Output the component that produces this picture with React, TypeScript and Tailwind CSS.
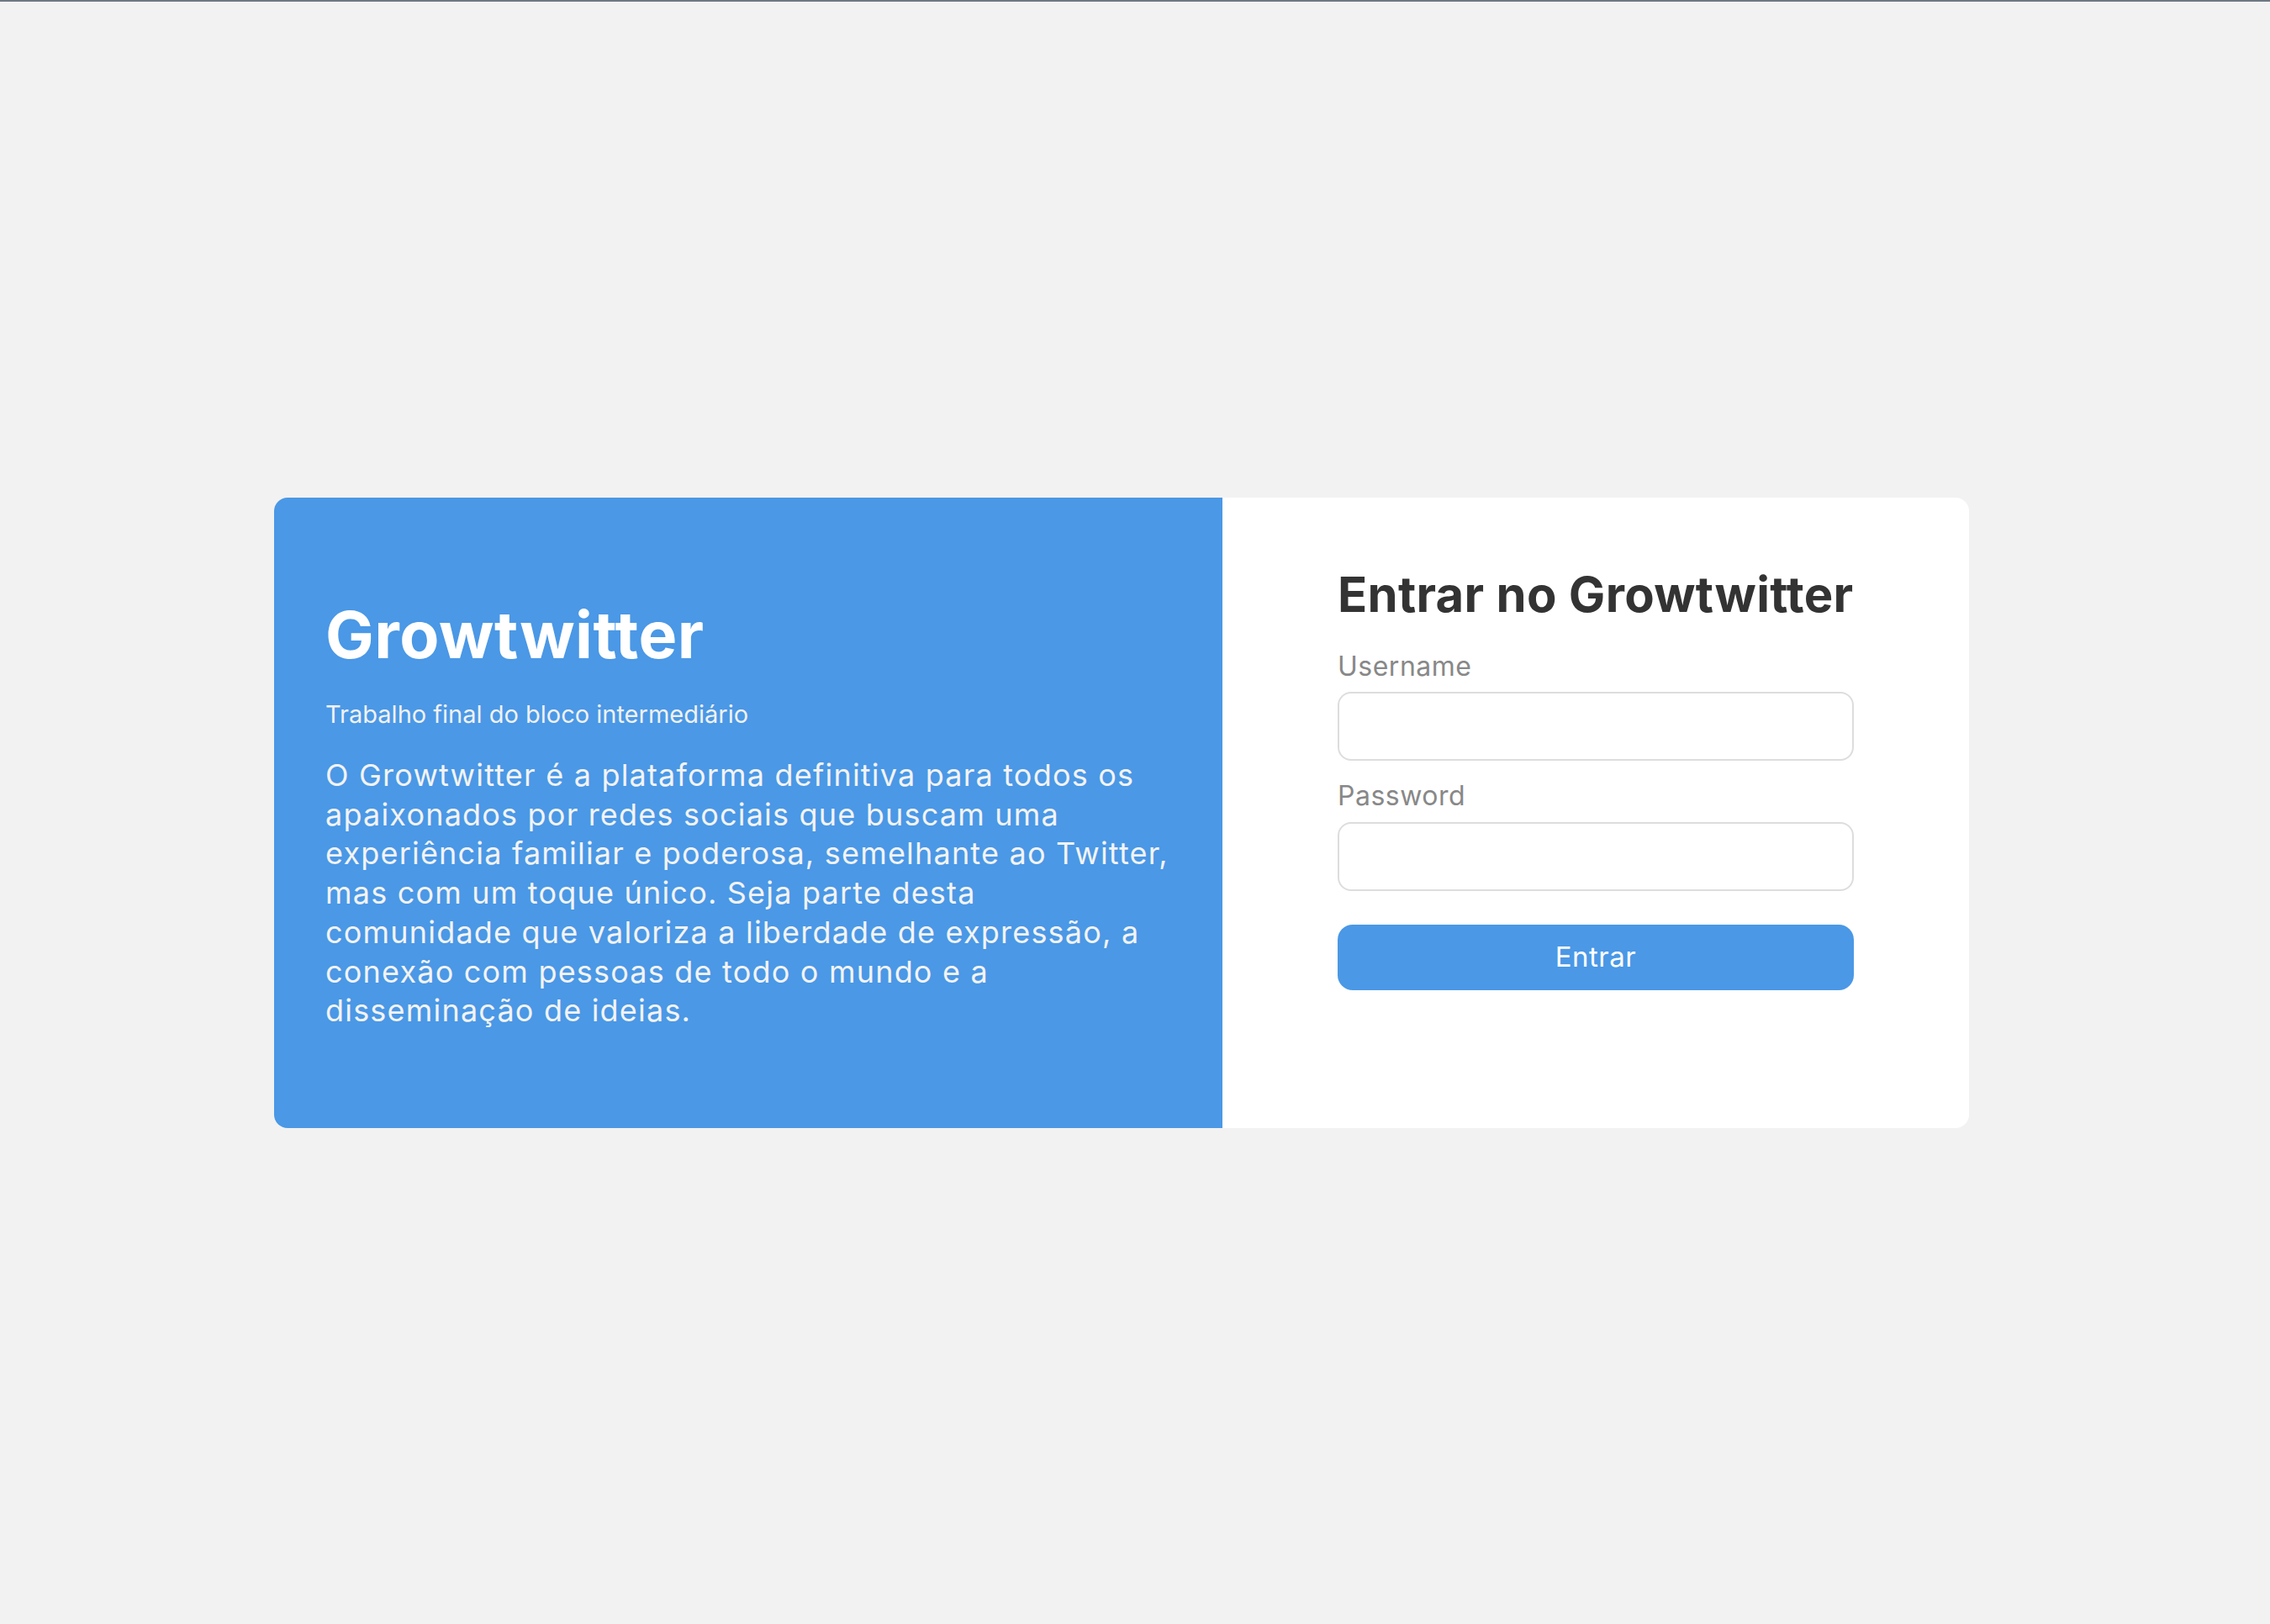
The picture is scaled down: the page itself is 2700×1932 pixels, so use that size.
import React from 'react';

const App = () => {
  const lines = [
    'O Growtwitter é a plataforma definitiva para todos os',
    'apaixonados por redes sociais que buscam uma',
    'experiência familiar e poderosa, semelhante ao Twitter,',
    'mas com um toque único. Seja parte desta',
    'comunidade que valoriza a liberdade de expressão, a',
    'conexão com pessoas de todo o mundo e a',
    'disseminação de ideias.',
  ];

  return (
    <div className="w-full h-[1932px] bg-[#f2f2f2] flex flex-col font-['Inter',sans-serif]">
      <div className="h-[2px] bg-[#6e7881]" />
      <div className="flex-1 flex items-center justify-center pr-[32px]">
        {/* Card */}
        <div className="flex w-[2016px] h-[750px] rounded-[16px] overflow-hidden bg-white">
          {/* Left: intro */}
          <div className="w-[1128px] bg-[#4a98e6] px-[61px] pt-[118px]">
            <h1 className="text-[77px] leading-[91px] font-bold tracking-[0.5px] text-white">Growtwitter</h1>
            <p className="mt-[32px] text-[29px] leading-[34px] text-[#f1f1f1]">
              Trabalho final do bloco intermediário
            </p>
            <p className="mt-[32px] text-[36px] leading-[46.7px] tracking-[1.2px] text-[#f3f3f3]">
              {lines.map((line, i) => (
                <React.Fragment key={i}>
                  {line}
                  {i < lines.length - 1 && <br />}
                </React.Fragment>
              ))}
            </p>
          </div>

          {/* Right: login form */}
          <div className="flex-1 px-[137px] pt-[82px]">
            <h2 className="text-[58px] leading-[67px] font-bold tracking-[0.3px] text-[#333333]">
              Entrar no Growtwitter
            </h2>
            <form className="flex flex-col" onSubmit={(e) => e.preventDefault()}>
              <label className="mt-[33px] text-[32px] leading-[37px] tracking-[0.5px] text-[#888888]">Username</label>
              <input
                type="text"
                className="mt-[12px] h-[82px] w-full rounded-[16px] border-2 border-[#dddddd] bg-white px-4 text-[28px] outline-none"
              />
              <label className="mt-[23px] text-[32px] leading-[37px] tracking-[0.5px] text-[#888888]">Password</label>
              <input
                type="password"
                className="mt-[13px] h-[82px] w-full rounded-[16px] border-2 border-[#dddddd] bg-white px-4 text-[28px] outline-none"
              />
              <button
                type="submit"
                className="mt-[40px] h-[78px] w-full rounded-[18px] bg-[#4a98e6] text-[33px] tracking-[0.5px] text-white"
              >
                Entrar
              </button>
            </form>
          </div>
        </div>
      </div>
    </div>
  );
};

export default App;
